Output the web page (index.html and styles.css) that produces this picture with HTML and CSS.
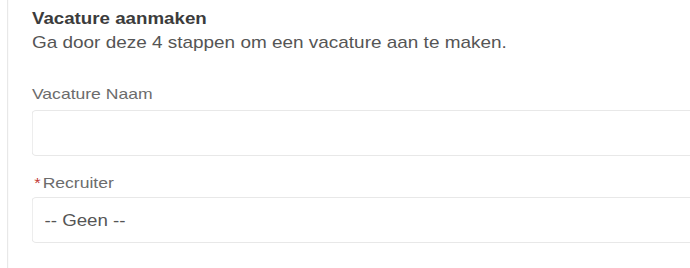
FILE: index.html
```html
<!DOCTYPE html>
<html lang="nl">
<head>
<meta charset="utf-8">
<title>Vacature aanmaken</title>
<link rel="stylesheet" href="styles.css">
</head>
<body>
<div class="page">
  <div class="panel">
    <h2 class="title">Vacature aanmaken</h2>
    <p class="intro">Ga door deze 4 stappen om een vacature aan te maken.</p>
    <div class="field field-name">
      <label class="label" for="naam">Vacature Naam</label>
      <input id="naam" class="control" type="text">
    </div>
    <div class="field field-recruiter">
      <label class="label" for="rec"><abbr class="req" title="verplicht">*</abbr>Recruiter</label>
      <select id="rec" class="control select"><option>-- Geen --</option></select>
    </div>
  </div>
</div>
</body>
</html>
```
FILE: styles.css
```css
html, body {
  margin: 0;
  padding: 0;
  overflow: hidden;
  background: #ffffff;
}
body {
  font-family: "Liberation Sans", Arial, sans-serif;
}
.page {
  width: 589.7px;
  height: 268px;
  transform: scaleX(1.17);
  transform-origin: 0 0;
}
.panel {
  margin-left: 6px;
  height: 268px;
  box-sizing: border-box;
  border-left: 1px solid #e8e8e8;
  padding: 8px 0 0 19.5px;
}
.title {
  margin: 0;
  padding-left: 0.8px;
  font-size: 16px;
  line-height: 22px;
  font-weight: 700;
  color: #3c3c3c;
}
.intro {
  margin: 0;
  padding-left: 0.8px;
  font-size: 16.2px;
  line-height: 24px;
  color: #555555;
}
.field {
  display: flex;
  flex-direction: column;
}
.field-name {
  margin-top: 29.6px;
}
.field-recruiter {
  margin-top: 16.5px;
}
.label {
  padding-left: 0.8px;
  font-size: 15px;
  line-height: 20px;
  color: #6c6c6c;
}
.field-name .label {
  margin-bottom: 6.5px;
}
.field-recruiter .label {
  margin-bottom: 4.5px;
}
.req {
  text-decoration: none;
  border: 0;
  color: #c23934;
  font-size: 14px;
  margin: 0 1.7px 0 2px;
}
.control {
  display: block;
  box-sizing: border-box;
  width: 100%;
  height: 46px;
  margin: 0;
  border: 1px solid #e8e8e8;
  border-right: 0;
  border-radius: 4px 0 0 4px;
  background: #ffffff;
  font-family: "Liberation Sans", Arial, sans-serif;
  font-size: 16px;
  color: #555555;
  outline: none;
}
.select {
  -webkit-appearance: none;
  appearance: none;
  padding: 0 0 0 10.5px;
}
```
